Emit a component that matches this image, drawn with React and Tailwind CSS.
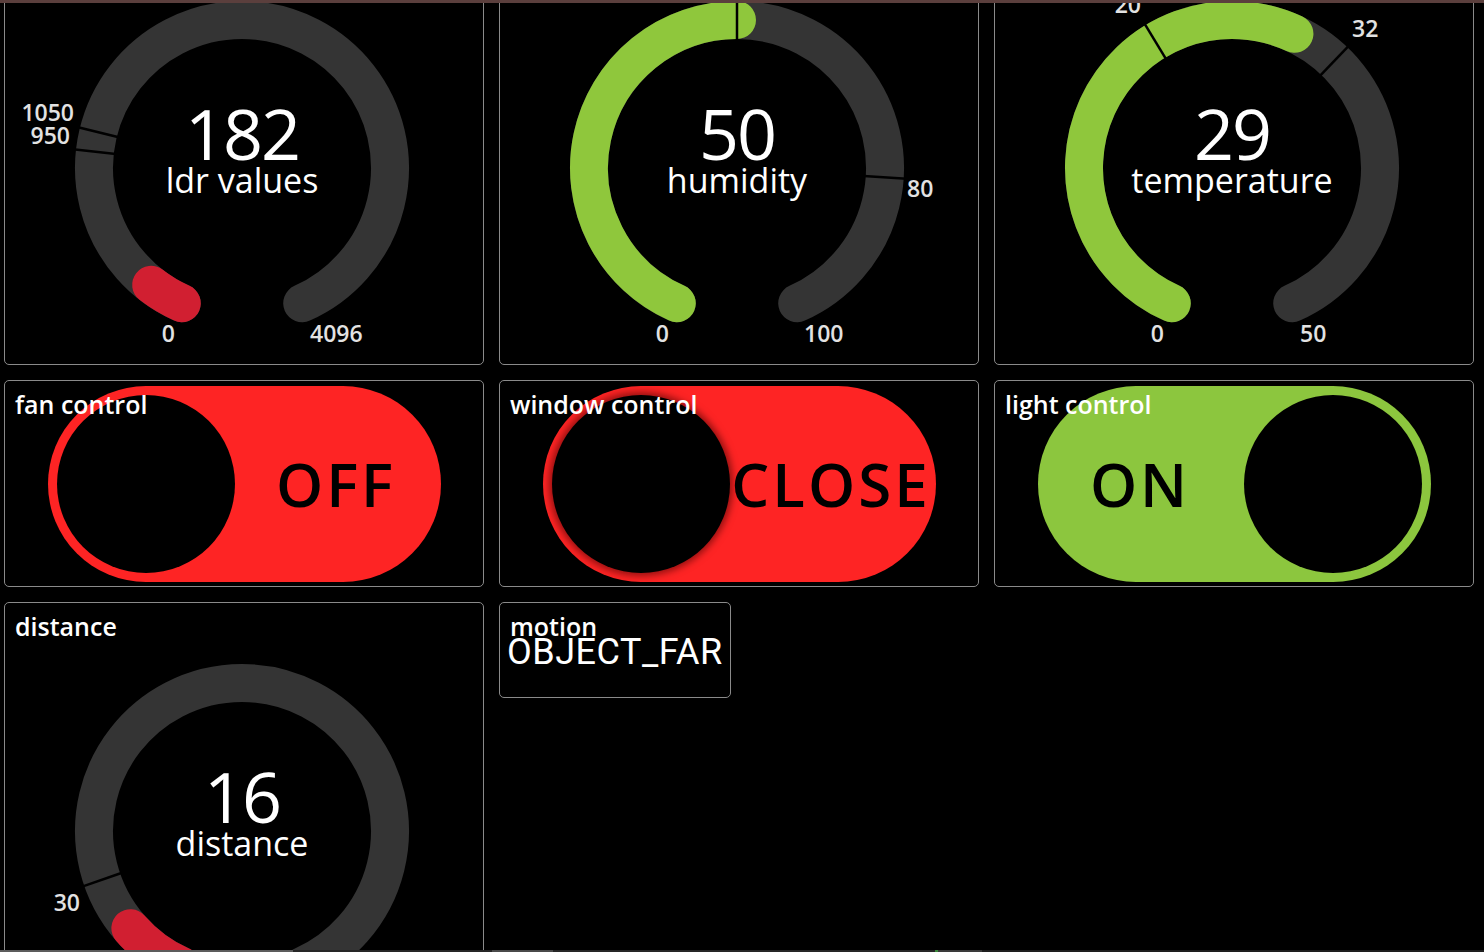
import React from 'react';

const SANS = { fontFamily: '"Open Sans", "Noto Sans", sans-serif' };

const CX = 237;
const CY = 228;
const R = 148;
const A0 = -156;
const A1 = 156;

function pt(r, deg) {
  const t = (deg * Math.PI) / 180;
  return [CX + r * Math.sin(t), CY - r * Math.cos(t)];
}

function arc(from, to) {
  const [x0, y0] = pt(R, from);
  const [x1, y1] = pt(R, to);
  const large = to - from > 180 ? 1 : 0;
  return `M ${x0} ${y0} A ${R} ${R} 0 ${large} 1 ${x1} ${y1}`;
}

const gauges = [
  {
    value: 182,
    max: 4096,
    unit: 'ldr values',
    color: '#d11f31',
    ticks: [950, 1050],
    labels: [
      { t: '0', dx: -67, dy: 174, a: 'end' },
      { t: '4096', dx: 68, dy: 174, a: 'start' },
      { t: '1050', dx: -168, dy: -47, a: 'end' },
      { t: '950', dx: -172, dy: -24, a: 'end' },
    ],
  },
  {
    value: 50,
    max: 100,
    unit: 'humidity',
    color: '#8fc73c',
    ticks: [50, 80],
    labels: [
      { t: '0', dx: -68, dy: 174, a: 'end' },
      { t: '100', dx: 67, dy: 174, a: 'start' },
      { t: '80', dx: 170, dy: 29, a: 'start' },
    ],
  },
  {
    value: 29,
    max: 50,
    unit: 'temperature',
    color: '#8fc73c',
    ticks: [20, 32],
    labels: [
      { t: '0', dx: -68, dy: 174, a: 'end' },
      { t: '50', dx: 68, dy: 174, a: 'start' },
      { t: '32', dx: 120, dy: -131, a: 'start' },
      { t: '20', dx: -91, dy: -155, a: 'end' },
    ],
  },
];

// bottom gauge runs past the window edge, only the threshold label shows
const distance = {
  title: 'distance',
  value: 16,
  max: 200,
  unit: 'distance',
  color: '#d11f31',
  ticks: [30],
  labels: [{ t: '30', dx: -162, dy: 80, a: 'end' }],
};

function Card({ className = '', children }) {
  return <div className={`relative overflow-hidden rounded-[5px] border border-[#8a8a8a] bg-black ${className}`}>{children}</div>;
}

function Title({ children }) {
  return (
    <span className="absolute left-[10px] top-[11px] z-10 text-[25px] font-semibold leading-none text-white" style={SANS}>
      {children}
    </span>
  );
}

function Gauge({ g }) {
  const ang = (v) => A0 + (v / g.max) * (A1 - A0);
  return (
    <Card className="h-[426px]">
      {g.title ? <Title>{g.title}</Title> : null}
      <svg width="478" height="424" className="block" style={SANS}>
        <path d={arc(A0, A1)} stroke="#343434" strokeWidth="38" fill="none" strokeLinecap="round" />
        <path d={arc(A0, ang(g.value))} stroke={g.color} strokeWidth="38" fill="none" strokeLinecap="round" />
        {g.ticks.map((v) => {
          const [x1, y1] = pt(127, ang(v));
          const [x2, y2] = pt(170, ang(v));
          return <line key={v} x1={x1} y1={y1} x2={x2} y2={y2} stroke="#000" strokeWidth="2.5" />;
        })}
        {g.labels.map((l) => (
          <text key={l.t} x={CX + l.dx} y={CY + l.dy} textAnchor={l.a} fontSize="23" fontWeight="600" fill="#e2e2e2">
            {l.t}
          </text>
        ))}
        <text x={CX} y={CY - 8} textAnchor="middle" fontSize="70" fill="#fff" letterSpacing="-2">
          {g.value}
        </text>
        <text x={CX} y={CY + 25} textAnchor="middle" fontSize="34" fill="#fff">
          {g.unit}
        </text>
      </svg>
    </Card>
  );
}

function Toggle({ title, text, on, shadow }) {
  const knob = (
    <div
      className={`h-[178px] w-[178px] shrink-0 rounded-full bg-black ${shadow ? 'shadow-[0_0_7px_3px_rgba(60,0,0,0.55)]' : ''}`}
    />
  );
  const label = (
    <div className={`flex min-w-0 flex-1 justify-center ${on ? 'pr-[10px]' : 'pl-[6px]'}`}>
      <span className="whitespace-nowrap text-[60px] font-semibold leading-none tracking-[3px] text-black" style={SANS}>
        {text}
      </span>
    </div>
  );
  return (
    <Card className="flex h-[207px] items-center justify-center">
      <Title>{title}</Title>
      <div className={`flex h-[196px] w-[393px] items-center rounded-full p-[9px] ${on ? 'bg-[#8cc63e]' : 'bg-[#fe2424]'}`}>
        {on ? label : knob}
        {on ? knob : label}
      </div>
    </Card>
  );
}

export default function App() {
  return (
    <div className="flex h-[952px] w-[1484px] flex-col overflow-hidden bg-black">
      <div className="h-[3px] shrink-0 bg-[#5b3f3d]" />
      <div className="min-h-0 flex-1 overflow-hidden">
        <div className="-mt-[64px] ml-[4px] grid grid-cols-[480px_480px_480px] items-start gap-[15px]">
          {gauges.map((g) => (
            <Gauge key={g.unit} g={g} />
          ))}
          <Toggle title="fan control" text="OFF" />
          <Toggle title="window control" text="CLOSE" shadow />
          <Toggle title="light control" text="ON" on />
          <Gauge g={distance} />
          <Card className="flex h-[96px] w-[232px] flex-col px-[10px] pt-[11px]">
            <span className="text-[25px] font-semibold leading-none text-white" style={SANS}>
              motion
            </span>
            <span
              className="-ml-[3px] -mt-[5px] text-[36px] leading-none tracking-[0.5px] text-white"
              style={{ fontFamily: 'Roboto, "Noto Sans", sans-serif' }}
            >
              OBJECT_FAR
            </span>
          </Card>
        </div>
      </div>
      <div className="flex h-[2px] shrink-0">
        <div className="w-[293px] bg-[#5c5c5c]" />
        <div className="w-[199px] bg-[#262626]" />
        <div className="w-[61px] bg-[#4a4a4a]" />
        <div className="w-[382px] bg-[#262626]" />
        <div className="w-[3px] bg-[#3c8a3c]" />
        <div className="w-[44px] bg-[#3a3a3a]" />
        <div className="flex-1 bg-[#1e1e1e]" />
      </div>
    </div>
  );
}
